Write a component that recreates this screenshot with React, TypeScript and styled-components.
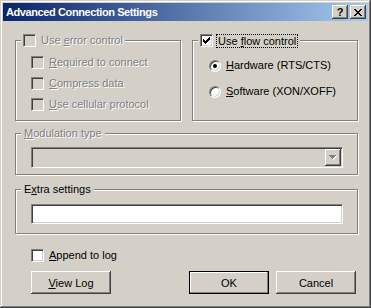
import React from 'react'
import styled, { createGlobalStyle, css } from 'styled-components'

const face = '#d4d0c8'
const shadow = '#808080'
const darkShadow = '#404040'
const highlight = '#ffffff'

const GlobalStyle = createGlobalStyle`
  html, body {
    margin: 0;
    padding: 0;
    background: ${face};
  }
  body {
    font-family: "Liberation Sans", Arial, sans-serif;
    font-size: 11px;
    color: #000;
  }
  * {
    box-sizing: border-box;
  }
`

const raised = css`
  background: ${face};
  box-shadow: inset -1px -1px ${darkShadow}, inset 1px 1px ${highlight},
    inset -2px -2px ${shadow}, inset 2px 2px ${face};
`

const sunken = css`
  border: 1px solid;
  border-color: ${shadow} ${highlight} ${highlight} ${shadow};
  box-shadow: inset 1px 1px ${darkShadow}, inset -1px -1px ${face};
`

const Window = styled.div`
  width: 371px;
  height: 308px;
  display: flex;
  flex-direction: column;
  padding: 3px;
  background: ${face};
  box-shadow: inset -1px -1px ${darkShadow}, inset 1px 1px ${face},
    inset -2px -2px ${shadow}, inset 2px 2px ${highlight};
`

const TitleBar = styled.div`
  height: 18px;
  display: flex;
  align-items: center;
  padding: 0 2px 0 3px;
  background: linear-gradient(to right, #0a246a, #a6caf0);
  color: #fff;
  font-weight: bold;
  font-size: 11px;
`

const TitleText = styled.span`
  flex: 1;
  letter-spacing: -0.4px;
`

const CaptionButton = styled.span<{ $gap?: number }>`
  width: 16px;
  height: 14px;
  display: flex;
  align-items: center;
  justify-content: center;
  margin-right: ${p => p.$gap ?? 0}px;
  color: #000;
  font-size: 11px;
  font-weight: bold;
  line-height: 14px;
  ${raised}
`

const Body = styled.div`
  display: flex;
  flex-direction: column;
  padding: 13px 10px 0 12px;
`

const TopRow = styled.div`
  display: grid;
  grid-template-columns: 166px 166px;
  column-gap: 11px;
`

const Group = styled.fieldset<{ $mt?: number }>`
  margin: ${p => p.$mt ?? 0}px 0 0 0;
  padding: 0;
  min-width: 0;
  border: 1px solid ${shadow};
  box-shadow: inset 1px 1px ${highlight}, 1px 1px ${highlight};
`

const Legend = styled.legend<{ $text?: boolean }>`
  margin-left: 5px;
  padding: 0 ${p => (p.$text ? 3 : 2)}px;
  height: 13px;
  display: flex;
  align-items: center;
  gap: 5px;
  background: ${face};
  line-height: 13px;
`

const GroupBody = styled.div<{ $pad: string; $gap?: number }>`
  display: flex;
  flex-direction: column;
  gap: ${p => p.$gap ?? 0}px;
  padding: ${p => p.$pad};
`

const Row = styled.div<{ $indent?: number; $mt?: number }>`
  display: flex;
  align-items: center;
  gap: 5px;
  height: 13px;
  line-height: 13px;
  margin: ${p => p.$mt ?? 0}px 0 0 ${p => p.$indent ?? 0}px;
`

const Box = styled.span<{ $disabled?: boolean }>`
  width: 13px;
  height: 13px;
  flex-shrink: 0;
  display: block;
  background: ${p => (p.$disabled ? face : highlight)};
  ${sunken}
`

const RadioDot = styled.span<{ $checked?: boolean }>`
  width: 12px;
  height: 12px;
  flex-shrink: 0;
  border-radius: 50%;
  display: flex;
  align-items: center;
  justify-content: center;
  background: ${highlight};
  ${sunken}
  &::after {
    content: '';
    width: 4px;
    height: 4px;
    border-radius: 50%;
    background: ${p => (p.$checked ? '#000' : 'transparent')};
  }
`

const Label = styled.span<{ $disabled?: boolean }>`
  white-space: nowrap;
  ${p =>
    p.$disabled &&
    css`
      color: ${shadow};
      text-shadow: 1px 1px 0 ${highlight};
    `}
`

const FocusLabel = styled.span`
  white-space: nowrap;
  margin-left: -2px;
  padding: 0 1px;
  border: 1px dotted #000;
  line-height: 12px;
`

const Key = styled.span`
  text-decoration: underline;
`

const Combo = styled.div`
  height: 21px;
  display: flex;
  justify-content: flex-end;
  padding: 1px;
  background: ${face};
  ${sunken}
`

const DropButton = styled.span`
  width: 16px;
  height: 17px;
  display: flex;
  align-items: center;
  justify-content: center;
  ${raised}
`

const TextBox = styled.input`
  width: 100%;
  height: 20px;
  margin: 0;
  padding: 0 3px;
  background: ${highlight};
  font: inherit;
  outline: none;
  ${sunken}
`

const ButtonRow = styled.div`
  display: flex;
  gap: 7px;
  margin-top: 9px;
  padding: 0 2px 0 16px;
`

const PushButton = styled.button<{ $default?: boolean; $push?: boolean }>`
  width: 80px;
  height: 23px;
  margin: 0 0 0 ${p => (p.$push ? 'auto' : '0')};
  padding: 0;
  border: none;
  font: inherit;
  color: #000;
  ${raised}
  ${p =>
    p.$default &&
    css`
      border: 1px solid #000;
      box-shadow: inset -1px -1px ${shadow}, inset 1px 1px ${highlight};
    `}
`

const Check = () => (
  <svg width="11" height="11" viewBox="1 1 11 11" shapeRendering="crispEdges" style={{ display: 'block' }}>
    <rect x="9" y="3" width="1" height="1" />
    <rect x="8" y="4" width="2" height="1" />
    <rect x="3" y="5" width="1" height="1" />
    <rect x="7" y="5" width="3" height="1" />
    <rect x="3" y="6" width="2" height="1" />
    <rect x="6" y="6" width="3" height="1" />
    <rect x="3" y="7" width="5" height="1" />
    <rect x="4" y="8" width="3" height="1" />
    <rect x="5" y="9" width="1" height="1" />
  </svg>
)

const CloseGlyph = () => (
  <svg width="8" height="7" shapeRendering="crispEdges" style={{ display: 'block' }}>
    <path d="M0 0h2v1H0zM6 0h2v1H6zM1 1h2v1H1zM5 1h2v1H5zM2 2h4v1H2zM3 3h2v1H3zM2 4h4v1H2zM1 5h2v1H1zM5 5h2v1H5zM0 6h2v1H0zM6 6h2v1H6z" fill="#000" />
  </svg>
)

const DisabledArrow = () => (
  <svg width="8" height="5" shapeRendering="crispEdges" style={{ display: 'block' }}>
    <path d="M1 1h7v1H1zM2 2h5v1H2zM3 3h3v1H3zM4 4h1v1H4z" fill={highlight} />
    <path d="M0 0h7v1H0zM1 1h5v1H1zM2 2h3v1H2zM3 3h1v1H3z" fill={shadow} />
  </svg>
)

const CheckBox: React.FC<{ checked?: boolean; disabled?: boolean }> = ({ checked, disabled }) => (
  <Box $disabled={disabled}>{checked && <Check />}</Box>
)

const App: React.FC = () => {
  return (
    <>
      <GlobalStyle />
      <Window>
        <TitleBar>
          <TitleText>Advanced Connection Settings</TitleText>
          <CaptionButton $gap={2}>?</CaptionButton>
          <CaptionButton>
            <CloseGlyph />
          </CaptionButton>
        </TitleBar>

        <Body>
          <TopRow>
            <Group>
              <Legend>
                <CheckBox disabled />
                <Label $disabled>
                  Use <Key>e</Key>rror control
                </Label>
              </Legend>
              <GroupBody $pad="9px 0 9px 15px" $gap={8}>
                <Row>
                  <CheckBox disabled />
                  <Label $disabled>
                    <Key>R</Key>equired to connect
                  </Label>
                </Row>
                <Row>
                  <CheckBox disabled />
                  <Label $disabled>
                    <Key>C</Key>ompress data
                  </Label>
                </Row>
                <Row>
                  <CheckBox disabled />
                  <Label $disabled>
                    <Key>U</Key>se cellular protocol
                  </Label>
                </Row>
              </GroupBody>
            </Group>

            <Group>
              <Legend>
                <CheckBox checked />
                <FocusLabel>
                  Use <Key>f</Key>low control
                </FocusLabel>
              </Legend>
              <GroupBody $pad="12px 0 0 16px" $gap={13}>
                <Row>
                  <RadioDot $checked />
                  <Label>
                    <Key>H</Key>ardware (RTS/CTS)
                  </Label>
                </Row>
                <Row>
                  <RadioDot />
                  <Label>
                    <Key>S</Key>oftware (XON/XOFF)
                  </Label>
                </Row>
              </GroupBody>
            </Group>
          </TopRow>

          <Group $mt={6}>
            <Legend $text>
              <Label $disabled>
                <Key>M</Key>odulation type
              </Label>
            </Legend>
            <GroupBody $pad="7px 14px 6px 15px">
              <Combo>
                <DropButton>
                  <DisabledArrow />
                </DropButton>
              </Combo>
            </GroupBody>
          </Group>

          <Group $mt={8}>
            <Legend $text>
              <Label>
                E<Key>x</Key>tra settings
              </Label>
            </Legend>
            <GroupBody $pad="8px 14px 9px 15px">
              <TextBox readOnly />
            </GroupBody>
          </Group>

          <Row $indent={16} $mt={15}>
            <CheckBox />
            <Label>
              <Key>A</Key>ppend to log
            </Label>
          </Row>

          <ButtonRow>
            <PushButton>
              <Key>V</Key>iew Log
            </PushButton>
            <PushButton $default $push>
              OK
            </PushButton>
            <PushButton>Cancel</PushButton>
          </ButtonRow>
        </Body>
      </Window>
    </>
  )
}

export default App
